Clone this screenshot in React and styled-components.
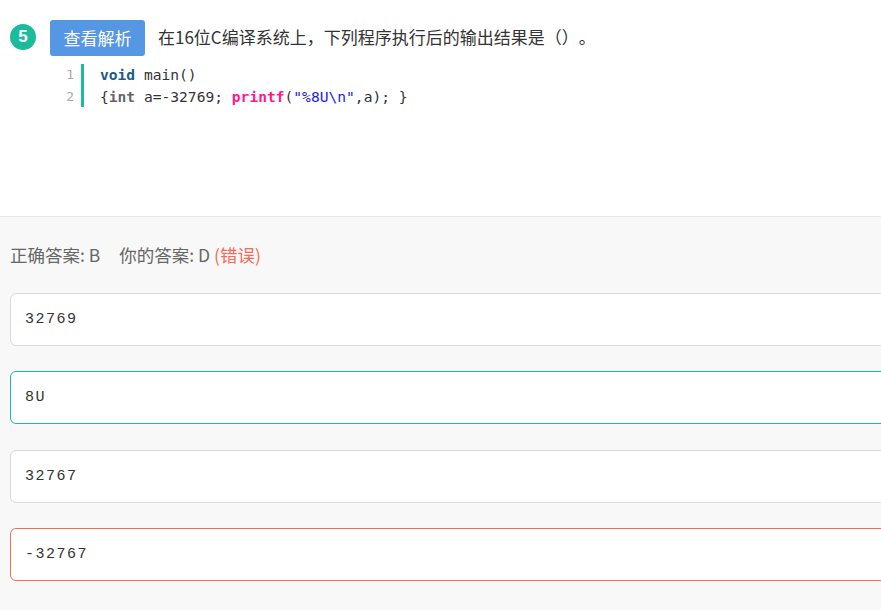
import React from "react";
import styled, { createGlobalStyle } from "styled-components";

const GlobalStyle = createGlobalStyle`
  html, body {
    margin: 0;
    padding: 0;
    background: #f8f8f8;
    overflow: hidden;
  }
  #root {
    width: 881px;
    height: 610px;
    overflow: hidden;
  }
`;

const code = [
  [
    { t: "void", k: "kw" },
    { t: " main()" },
  ],
  [
    { t: "{" },
    { t: "int", k: "type" },
    { t: " a=-32769; " },
    { t: "printf", k: "fn" },
    { t: "(" },
    { t: '"%8U\\n"', k: "str" },
    { t: ",a); }" },
  ],
];

const options = [
  { text: "32769", state: "normal" },
  { text: "8U", state: "correct" },
  { text: "32767", state: "normal" },
  { text: "-32767", state: "wrong" },
];

export default function App() {
  return (
    <Page>
      <GlobalStyle />
      <QuestionPanel>
        <HeaderRow>
          <NumberBadge>5</NumberBadge>
          <AnalysisButton>查看解析</AnalysisButton>
          <QuestionText>在16位C编译系统上，下列程序执行后的输出结果是（）。</QuestionText>
        </HeaderRow>

        {/* code snippet */}
        <CodeBlock>
          <Gutter>
            {code.map((_, i) => (
              <div key={i}>{i + 1}</div>
            ))}
          </Gutter>
          <CodeLines>
            {code.map((line, i) => (
              <div key={i}>
                {line.map((tok, j) => (
                  <Token key={j} $kind={tok.k}>
                    {tok.t}
                  </Token>
                ))}
              </div>
            ))}
          </CodeLines>
        </CodeBlock>
      </QuestionPanel>

      <AnswerPanel>
        <AnswerLine>
          正确答案: B<Spacer />你的答案: D <WrongMark>(错误)</WrongMark>
        </AnswerLine>
        <OptionList>
          {options.map((o, i) => (
            <OptionBox key={i} $state={o.state}>
              {o.text}
            </OptionBox>
          ))}
        </OptionList>
      </AnswerPanel>
    </Page>
  );
}

const Page = styled.div`
  width: 881px;
  height: 610px;
  display: flex;
  flex-direction: column;
  background: #f8f8f8;
  font-family: "Noto Sans CJK SC", "Noto Sans", sans-serif;
  text-spacing-trim: space-all;
`;

/* top: question */
const QuestionPanel = styled.section`
  height: 217px;
  flex-shrink: 0;
  box-sizing: border-box;
  background: #fff;
  border-bottom: 1px solid #e8e8e8;
  padding: 20px 0 0 10px;
`;

const HeaderRow = styled.div`
  display: flex;
  align-items: flex-start;
`;

const NumberBadge = styled.div`
  width: 26px;
  height: 26px;
  margin-top: 4px;
  border-radius: 50%;
  background: #1abc9c;
  color: #fff;
  font-family: "Liberation Sans", Arial, sans-serif;
  font-weight: 700;
  font-size: 17px;
  display: flex;
  align-items: center;
  justify-content: center;
`;

const AnalysisButton = styled.button`
  margin-left: 14px;
  height: 36px;
  padding: 0 13.5px;
  border: none;
  border-radius: 3px;
  background: #5597e3;
  color: #fff;
  font-family: "Noto Sans CJK SC", sans-serif;
  font-size: 17px;
  line-height: 36px;
  cursor: pointer;
`;

const QuestionText = styled.div`
  margin-left: 13px;
  font-size: 17px;
  line-height: 34px;
  color: #333;
  text-spacing-trim: space-all;
`;

const CodeBlock = styled.div`
  display: flex;
  margin: 8px 0 0 49px;
  font-family: "DejaVu Sans Mono", "Liberation Mono", monospace;
  font-size: 14.6px;
  line-height: 21.5px;
`;

const Gutter = styled.div`
  width: 15px;
  padding-right: 7px;
  text-align: right;
  color: #aaa;
  font-size: 13px;
  border-right: 3px solid #1abc9c;
`;

const CodeLines = styled.div`
  padding-left: 16px;
  color: #333;
  white-space: pre;
`;

const tokenColors = {
  kw: "#1a5a8c",
  type: "#666",
  fn: "#ff1a8c",
  str: "#1a1aff",
};

const Token = styled.span`
  color: ${(p) => tokenColors[p.$kind] || "#333"};
  font-weight: ${(p) => (p.$kind && p.$kind !== "str" ? 700 : 400)};
`;

/* bottom: answers */
const AnswerPanel = styled.section`
  flex: 1;
  padding: 26px 0 0 10px;
`;

const AnswerLine = styled.div`
  font-size: 17.5px;
  line-height: 24px;
  color: #666;
`;

const Spacer = styled.span`
  display: inline-block;
  width: 19px;
`;

const WrongMark = styled.span`
  color: #f66b57;
`;

const OptionList = styled.div`
  margin-top: 26px;
  display: flex;
  flex-direction: column;
  gap: 25.3px;
`;

const borderColors = {
  normal: "#dadada",
  correct: "#1abc9c",
  wrong: "#fa6b4c",
};

const OptionBox = styled.div`
  width: 920px;
  height: 53px;
  box-sizing: border-box;
  display: flex;
  align-items: center;
  padding-left: 14px;
  background: #fff;
  border: 1px solid ${(p) => borderColors[p.$state]};
  border-radius: 6px;
  font-family: "Liberation Mono", "Courier New", monospace;
  font-size: 15px;
  letter-spacing: 1.5px;
  color: #333;
`;
